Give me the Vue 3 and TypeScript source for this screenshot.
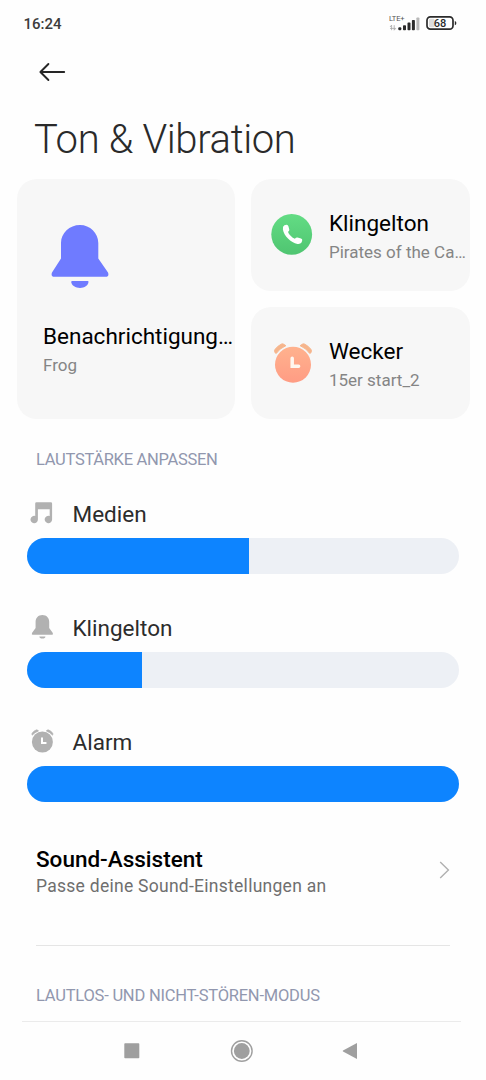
<script setup lang="ts">
interface Volume {
  id: 'media' | 'ring' | 'alarm'
  label: string
  level: number
}

const volumes: Volume[] = [
  { id: 'media', label: 'Medien', level: 51.33 },
  { id: 'ring', label: 'Klingelton', level: 26.67 },
  { id: 'alarm', label: 'Alarm', level: 100 },
]
</script>

<template>
  <div class="screen">
    <header class="status">
      <span class="time">16:24</span>
      <div class="indicators">
        <svg class="signal" width="32" height="18" viewBox="0 0 32 18">
          <text x="0" y="6.400" class="lte" textLength="15.500">LTE+</text>
          <path d="M2.600 15.200V10.200M1 12l1.600-1.900M5.200 10.200v5M6.800 13.300l-1.600 1.900M1 13.400h5.600" stroke="#a5a5a5" stroke-width=".8" fill="none" />
          <g fill="#2b2b2b">
            <rect x="9.300" y="12.300" width="3" height="3" rx="1" />
            <rect x="14" y="10.200" width="3" height="5.100" rx=".8" />
            <rect x="18.500" y="7.600" width="3" height="7.700" rx=".8" />
            <rect x="22.900" y="5" width="3" height="10.300" rx=".8" />
          </g>
          <rect x="27.400" y="2.400" width="3" height="12.900" rx=".8" fill="#b9b9b9" />
        </svg>
        <svg class="battery" width="32" height="16" viewBox="0 0 32 16">
          <rect x="1" y="1.800" width="26" height="12.400" rx="3.400" fill="#fff" stroke="#2b2b2b" stroke-width="1.700" />
          <rect x="3" y="3.700" width="5.600" height="8.600" rx="1.400" fill="#dcdcdc" />
          <path d="M28.800 5.900q1.600.4 1.600 2.200t-1.600 2.200z" fill="#2b2b2b" />
          <text x="14" y="12" class="percent" text-anchor="middle">68</text>
        </svg>
      </div>
    </header>

    <div class="toolbar">
      <svg width="28" height="20" viewBox="0 0 28 20" fill="none" stroke="#262626" stroke-width="1.900" stroke-linecap="round" stroke-linejoin="round">
        <path d="M26.200 10H2.600M10.400 2L2.400 10l8 8" />
      </svg>
    </div>

    <h1 class="title">Ton &amp; Vibration</h1>

    <section class="cards">
      <article class="card tall">
        <svg class="big-bell" width="58" height="64" viewBox="0 0 58 64" fill="#6f7bff">
          <path d="M29 1C39 1 47.300 9 47.300 19V34.500L57 48.500Q58.500 52.800 54.500 52.800H3.500Q-.5 52.800 1 48.500L10 34.500V19C10 9 18.500 1 29 1Z" />
          <path d="M21.200 57H36.800Q37.600 57 37.500 58C37 61.500 33.500 63.900 29 63.900S20.700 61.500 20.200 58Q20.200 57 21.200 57Z" />
        </svg>
        <div class="name">Benachrichtigung…</div>
        <div class="value">Frog</div>
      </article>

      <article class="card wide">
        <svg class="badge" width="42" height="42" viewBox="0 0 42 42">
          <defs>
            <linearGradient id="green" x1="0" y1="0" x2="0" y2="1">
              <stop offset="0" stop-color="#63dc84" />
              <stop offset="1" stop-color="#4fc571" />
            </linearGradient>
          </defs>
          <circle cx="20.700" cy="20.400" r="20.400" fill="url(#green)" />
          <path d="M13.400 11.300L15.600 10.800Q16.900 10.700 17.400 12.300L18.300 15.500Q18.500 16.700 17.100 17.800C17.300 20 21.400 24.200 23.900 24.700Q25.200 23.300 26.500 23.600L30 24.600Q31.600 25.200 31.200 26.600L30.500 28.500Q29.500 30.200 26.500 29.900C19.800 29 12.800 21.700 11.900 15.600Q11.500 12.300 13.400 11.300Z" fill="#fff" />
        </svg>
        <div class="texts">
          <div class="name">Klingelton</div>
          <div class="value">Pirates of the Ca…</div>
        </div>
      </article>

      <article class="card wide">
        <svg class="badge" width="42" height="42" viewBox="0 0 42 42">
          <defs>
            <linearGradient id="peach" x1="0" y1="0" x2="0" y2="1">
              <stop offset="0" stop-color="#ffb28e" />
              <stop offset="1" stop-color="#ff9c84" />
            </linearGradient>
          </defs>
          <path d="M5.200 11.500Q4.300 11.500 3.600 9.500Q3.200 8.400 4.200 7.200Q7 3.600 10.600 2Q11.600 1.700 12.400 2.100L14.900 3.700Q8.600 6.300 5.200 11.500ZM38.800 11.500Q39.700 11.500 40.400 9.500Q40.800 8.400 39.800 7.200Q37 3.600 33.400 2Q32.400 1.700 31.600 2.100L29.100 3.700Q35.400 6.300 38.800 11.500Z" fill="#f6b58c" stroke="#f6b58c" stroke-width="1" stroke-linejoin="round" />
          <circle cx="22" cy="22.700" r="18" fill="url(#peach)" />
          <path d="M21.200 16.300V24.200H27.600" fill="none" stroke="#fff7ef" stroke-width="3.500" stroke-linecap="round" stroke-linejoin="miter" />
        </svg>
        <div class="texts">
          <div class="name">Wecker</div>
          <div class="value">15er start_2</div>
        </div>
      </article>
    </section>

    <h2 class="section">LAUTSTÄRKE ANPASSEN</h2>

    <section class="volumes">
      <div v-for="v in volumes" :key="v.id" class="volume">
        <div class="head">
          <svg v-if="v.id === 'media'" class="icon" width="24" height="26" viewBox="0 0 24 26">
            <path d="M6.500 2.200H20.800Q22.100 2.200 22.100 3.500V19.500A3.700 3.700 0 1 1 19.700 16V9.200H7.900V19.500A3.700 3.700 0 1 1 5.200 16V3.500Q5.200 2.200 6.500 2.200Z" fill="#b1b1b1" />
          </svg>
          <svg v-else-if="v.id === 'ring'" class="icon" width="24" height="26" viewBox="0 0 24 26" fill="#b1b1b1">
            <path d="M12.400 1C16.500 1 19.200 3.900 19.200 7.800V13.900L22.800 18.900Q23.600 20.800 21.800 20.800H3Q1.200 20.800 2 18.900L5.600 13.900V7.800C5.600 3.900 8.300 1 12.400 1Z" />
            <path d="M9.400 22.400H15.400Q15.300 24.500 12.400 24.500T9.400 22.400Z" />
          </svg>
          <svg v-else class="icon" width="24" height="26" viewBox="0 0 24 26">
            <path d="M2.200 7.200Q1.300 5.900 2.600 4.500Q4.500 2.500 6.700 1.800Q7.600 1.800 8.500 3Q4.700 4.200 2.200 7.200ZM22.600 7.200Q23.500 5.900 22.200 4.500Q20.300 2.500 18.100 1.800Q17.200 1.800 16.300 3Q20.100 4.200 22.600 7.200Z" fill="#b1b1b1" stroke="#b1b1b1" stroke-width=".7" />
            <circle cx="12.400" cy="14" r="10.500" fill="#b1b1b1" />
            <path d="M12 10.200V14.900H15.700" fill="none" stroke="#fff" stroke-width="2" stroke-linecap="round" />
          </svg>
          <span>{{ v.label }}</span>
        </div>
        <div class="track"><div class="fill" :style="{ width: v.level + '%' }"></div></div>
      </div>
    </section>

    <section class="assistant">
      <div>
        <div class="assistant-name">Sound-Assistent</div>
        <div class="assistant-note">Passe deine Sound-Einstellungen an</div>
      </div>
      <svg width="12" height="18" viewBox="0 0 12 18" fill="none" stroke="#b0b0b0" stroke-width="1.400">
        <path d="M2.200 1L10.400 9l-8.200 8" />
      </svg>
    </section>

    <h2 class="section silent">LAUTLOS- UND NICHT-STÖREN-MODUS</h2>

    <nav class="nav">
      <svg width="438" height="58" viewBox="0 0 438 58" fill="#9f9f9f">
        <rect x="102.300" y="21.300" width="15" height="15" rx=".8" />
        <circle cx="219.800" cy="29" r="10.300" fill="none" stroke="#9f9f9f" stroke-width="1.400" />
        <circle cx="219.800" cy="29" r="7.900" />
        <path d="M335 20.900V37.100L321 29.400Q320.400 29 321 28.600Z" />
      </svg>
    </nav>
  </div>
</template>

<style>
body {
  background: #fefefe;
}
</style>

<style scoped>
.screen {
  box-sizing: border-box;
  width: 486px;
  height: 1080px;
  overflow: hidden;
  background: #fefefe;
  font-family: Roboto, "Liberation Sans", sans-serif;
  color: #000;
  white-space: nowrap;
}
.status {
  display: flex;
  justify-content: space-between;
  height: 48px;
  padding: 0 28px 0 23.500px;
}
.time {
  font-size: 15px;
  font-weight: 500;
  line-height: 48px;
  color: #3c3c3c;
}
.indicators {
  display: flex;
  gap: 5px;
  padding-top: 15px;
}
.lte {
  font-size: 7.500px;
  fill: #555;
}
.percent {
  font-size: 11px;
  font-weight: 500;
  fill: #2b2b2b;
}
.toolbar {
  height: 20px;
  padding: 14px 0 0 38px;
}
.toolbar svg,
.nav svg {
  display: block;
}
.title {
  margin: 32.500px 0 0 34px;
  font-size: 40px;
  line-height: 50px;
  font-weight: 300;
  letter-spacing: -0.350px;
  color: #2a2a2a;
}
.cards {
  display: grid;
  grid-template-columns: 218.500px 219px;
  grid-template-rows: 112px 112px;
  gap: 16px;
  margin: 14.500px 16px 0 16.500px;
}
.card {
  border-radius: 20px;
  background: #f7f7f7;
}
.tall {
  grid-row: span 2;
  padding: 45px 0 0 26.500px;
}
.big-bell {
  display: block;
  margin: 0 0 33px 8px;
}
.wide {
  display: flex;
  align-items: center;
}
.texts {
  padding-top: 4px;
}
.badge {
  margin: 0 16px 0 20px;
}
.name {
  font-size: 22.500px;
  line-height: 30px;
}
.value {
  font-size: 17px;
  line-height: 28px;
  color: #858585;
}
.section {
  margin: 25.500px 0 0 36px;
  font-size: 16.500px;
  line-height: 30px;
  font-weight: 400;
  letter-spacing: -0.300px;
  color: #9197ae;
}
.volumes {
  display: flex;
  flex-direction: column;
  gap: 39px;
  margin: 24.500px 27px 0;
}
.head {
  display: flex;
  align-items: center;
  height: 30px;
  margin-bottom: 9px;
  font-size: 22.500px;
  line-height: 30px;
  color: #2c2c2c;
}
.icon {
  margin: 0 18.500px 2px 3px;
}
.track {
  height: 36px;
  border-radius: 18px;
  overflow: hidden;
  background: #edf0f5;
}
.fill {
  height: 100%;
  background: #0d84ff;
}
.assistant {
  display: flex;
  justify-content: space-between;
  height: 101px;
  margin: 42px 36px 0;
  border-bottom: 1px solid #e5e5e5;
}
.assistant > svg {
  margin-top: 17px;
}
.assistant-name {
  font-size: 22.500px;
  line-height: 30px;
  font-weight: 500;
}
.assistant-note {
  font-size: 17.500px;
  line-height: 25px;
  letter-spacing: 0.270px;
  color: #6f6f6f;
}
.silent {
  margin-top: 34.500px;
  letter-spacing: -0.220px;
}
.nav {
  margin: 10px 25px 0 22px;
  border-top: 1px solid #ebebeb;
}
</style>
